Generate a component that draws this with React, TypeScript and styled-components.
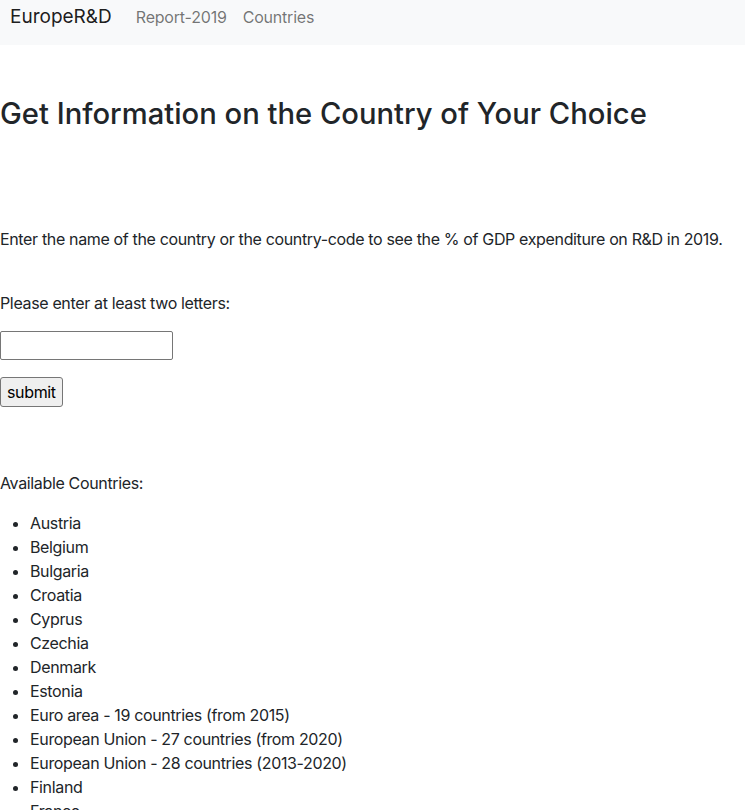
import React from "react";
import styled, { createGlobalStyle } from "styled-components";

const Global = createGlobalStyle`
  html, body { margin: 0; padding: 0; background: #fff; }
  body {
    font-family: Inter, "Noto Sans", "Liberation Sans", sans-serif;
    font-size: 16px;
    line-height: 24px;
    color: #212529;
  }
  * { box-sizing: border-box; }
`;

const NavBar = styled.nav`
  height: 45px;
  background: #f8f9fa;
  display: flex;
  align-items: flex-start;
  padding: 2px 10px 0;
`;

const Brand = styled.a`
  font-size: 19px;
  line-height: 30px;
  color: rgba(0, 0, 0, 0.9);
  margin-right: 16px;
  text-decoration: none;
`;

const NavLink = styled.a`
  font-size: 16px;
  line-height: 30px;
  padding: 0 8px;
  letter-spacing: -0.2px;
  color: rgba(0, 0, 0, 0.55);
  text-decoration: none;
`;

const Main = styled.main`
  display: flex;
  flex-direction: column;
  align-items: flex-start;
  letter-spacing: -0.35px;
`;

const Title = styled.h1`
  margin: 49px 0 0;
  font-size: 29.2px;
  line-height: 40px;
  font-weight: 500;
  letter-spacing: 0;
`;

const Text = styled.p<{ $top: number }>`
  margin: ${(p) => p.$top}px 0 0;
`;

const Input = styled.input`
  margin-top: 16px;
  width: 173px;
  height: 29px;
  border: 1px solid #767676;
  border-radius: 2px;
  background: #fff;
  font: inherit;
`;

const Button = styled.button`
  margin-top: 17px;
  height: 30px;
  padding: 1px 6px;
  font: inherit;
  letter-spacing: inherit;
  color: #000;
  background: #efefef;
  border: 1px solid #767676;
  border-radius: 3px;
`;

const List = styled.ul`
  margin: 16px 0 0;
  padding-left: 30px;
`;

const countries = [
  "Austria",
  "Belgium",
  "Bulgaria",
  "Croatia",
  "Cyprus",
  "Czechia",
  "Denmark",
  "Estonia",
  "Euro area - 19 countries (from 2015)",
  "European Union - 27 countries (from 2020)",
  "European Union - 28 countries (2013-2020)",
  "Finland",
  "France",
  "Germany",
];

export default function App() {
  return (
    <>
      <Global />
      <NavBar>
        <Brand href="#">EuropeR&amp;D</Brand>
        <NavLink href="#">Report-2019</NavLink>
        <NavLink href="#">Countries</NavLink>
      </NavBar>
      <Main>
        <Title>Get Information on the Country of Your Choice</Title>
        <Text $top={93}>
          Enter the name of the country or the country-code to see the % of GDP expenditure on R&amp;D in 2019.
        </Text>
        <Text $top={40}>Please enter at least two letters:</Text>
        <Input type="text" />
        <Button>submit</Button>
        <Text $top={64}>Available Countries:</Text>
        <List>
          {countries.map((c) => (
            <li key={c}>{c}</li>
          ))}
        </List>
      </Main>
    </>
  );
}
